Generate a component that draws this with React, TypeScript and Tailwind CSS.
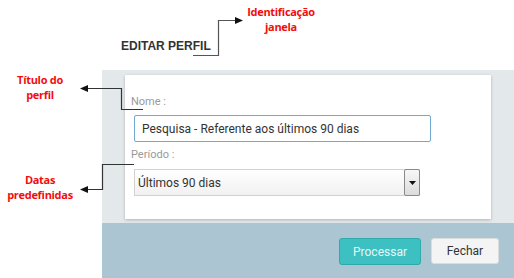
import React from "react";

function Callouts() {
  // annotation arrows drawn over the screen
  return (
    <svg
      className="absolute inset-0 pointer-events-none"
      width={514}
      height={278}
      viewBox="0 0 514 278"
    >
      <g fill="none" strokeWidth={1.2}>
        <polyline points="193,55.5 218.5,55.5 218.5,20.5 236,20.5" stroke="#555" />
        <polyline points="87,88.5 121.5,88.5 121.5,109.5 143,109.5" stroke="#333" />
        <polyline points="87,189.5 102.5,189.5 102.5,164.5 134,164.5" stroke="#333" />
      </g>
      <g fill="#111">
        <polygon points="243,20.5 235,17 235,24" />
        <polygon points="80,88.5 88,85 88,92" />
        <polygon points="80,189.5 88,186 88,193" />
      </g>
    </svg>
  );
}

function Note({ className, lines }: { className: string; lines: string[] }) {
  return (
    <div
      className={`absolute text-center font-bold text-[11px] leading-[15px] tracking-[-0.3px] text-[#f20d0d] font-['Open_Sans',sans-serif] ${className}`}
    >
      {lines.map((l) => (
        <div key={l}>{l}</div>
      ))}
    </div>
  );
}

export default function App() {
  return (
    <div className="relative w-[514px] h-[278px] bg-white overflow-hidden font-['Roboto',sans-serif]">
      <div className="h-[70px] pt-[39px] pl-[121px]">
        <div className="text-[12px] leading-[14px] font-bold text-[#333] font-['Liberation_Sans',Arial,sans-serif]">
          EDITAR PERFIL
        </div>
      </div>

      <div className="ml-[102px] h-[208px] flex flex-col">
        {/* Body */}
        <div className="bg-[#e3e8eb] pt-[5px] pb-[4px] px-[23px]">
          <div className="h-[144px] bg-white shadow-[0_1px_3px_rgba(0,0,0,0.22)] pt-[20px]">
            <div className="pl-[6px] text-[11px] leading-[14px] text-[#9a9a9a]">Nome :</div>
            <div className="mt-[6px] ml-[9px] w-[297px] h-[27px] border border-[#70a9d2] rounded-[2px] flex items-center pl-[7px] text-[12px] text-[#333]">
              Pesquisa - Referente aos últimos 90 dias
            </div>
            <div className="mt-[6px] pl-[6px] text-[11px] leading-[14px] text-[#9a9a9a]">Período :</div>
            <div className="mt-[7px] ml-[9px] w-[286px] h-[27px] border border-[#d2d2d2] bg-gradient-to-b from-white to-[#f1f1f1] flex items-center">
              <span className="flex-1 pl-[3px] text-[12px] text-[#333]">Últimos 90 dias</span>
              <span className="w-[16px] h-[27px] border border-[#8a8a8a] rounded-[2px] bg-gradient-to-b from-[#f7f7f7] to-[#dcdcdc] flex items-center justify-center -mr-px">
                <svg width="7" height="4" viewBox="0 0 7 4">
                  <polygon points="0,0 7,0 3.5,4" fill="#111" />
                </svg>
              </span>
            </div>
          </div>
        </div>

        {/* Footer */}
        <div className="flex-1 bg-[#acc5d2] flex justify-end items-start gap-[10px] pt-[15px] pr-[15px]">
          <button className="w-[82px] h-[27px] rounded-[3px] bg-[#3cc0c1] border border-[#2fa9aa] text-[12px] text-[#e6f7f7]">
            Processar
          </button>
          <button className="w-[68px] h-[26px] rounded-[3px] bg-[#f4f4f4] border border-[#dcdcdc] text-[12px] text-[#333]">
            Fechar
          </button>
        </div>
      </div>

      <Callouts />
      <Note className="left-[241px] top-[4px] w-[80px]" lines={["Identificação", "janela"]} />
      <Note className="left-[0px] top-[72px] w-[80px]" lines={["Título do", "perfil"]} />
      <Note className="left-[0px] top-[172px] w-[80px]" lines={["Datas", "predefinidas"]} />
    </div>
  );
}
